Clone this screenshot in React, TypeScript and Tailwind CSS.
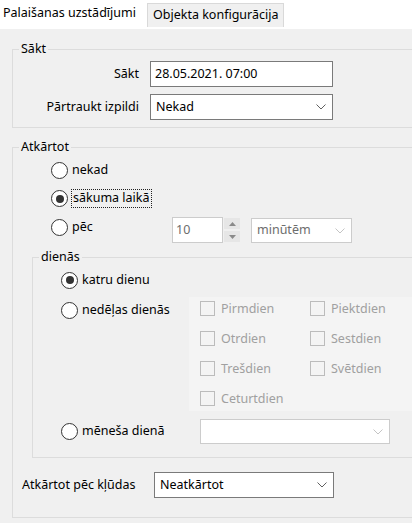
import React from "react";

function Radio({ checked = false }: { checked?: boolean }) {
  return (
    <div className="w-[17px] h-[17px] shrink-0 rounded-full border border-[#333333] bg-white flex items-center justify-center">
      {checked && <div className="w-[8px] h-[8px] rounded-full bg-[#333333]" />}
    </div>
  );
}

function Chevron({ disabled = false }: { disabled?: boolean }) {
  return (
    <svg width="10" height="6" viewBox="0 0 10 6" className="shrink-0">
      <path
        d="M0.5 0.5 L5 5 L9.5 0.5"
        fill="none"
        stroke={disabled ? "#c4c4c4" : "#606060"}
        strokeWidth="1"
      />
    </svg>
  );
}

function Combo({
  value,
  disabled = false,
  className,
}: {
  value: string;
  disabled?: boolean;
  className: string;
}) {
  return (
    <div
      className={
        "flex items-center justify-between bg-white border pl-[5px] pr-[6px] " +
        (disabled ? "border-[#cccccc] text-[#6d6d6d] " : "border-[#7a7a7a] ") +
        className
      }
    >
      <span>{value}</span>
      <Chevron disabled={disabled} />
    </div>
  );
}

function DayBox({ label }: { label: string }) {
  return (
    <div className="flex items-center h-[15px]">
      <div className="w-[15px] h-[15px] shrink-0 border border-[#bcbcbc]" />
      <span className="ml-[6px] text-[#a0a0a0] leading-[15px]">{label}</span>
    </div>
  );
}

function Arrow({ up }: { up: boolean }) {
  return (
    <svg width="7" height="4" viewBox="0 0 7 4">
      <path d={up ? "M0 4 L3.5 0 L7 4 Z" : "M0 0 L3.5 4 L7 0 Z"} fill="#8a8a8a" />
    </svg>
  );
}

export default function App() {
  return (
    <div className="w-[412px] h-[523px] overflow-hidden bg-white font-['Noto_Sans',sans-serif] text-[12.5px] text-black flex flex-col">
      {/* tab strip */}
      <div className="flex h-[29px] shrink-0">
        <div className="w-[147px] h-[29px] bg-white pl-[3px] pt-[5px] leading-[16px] whitespace-nowrap">
          Palaišanas uzstādījumi
        </div>
        <div className="mt-[3px] h-[24px] w-[137px] bg-[#f0f0f0] border border-b-0 border-[#d9d9d9] pl-[5px] pt-[3px] leading-[16px] whitespace-nowrap">
          Objekta konfigurācija
        </div>
      </div>

      {/* tab page */}
      <div className="flex-1 bg-[#f0f0f0] pl-[12px] pt-[12px]">
        {/* start */}
        <fieldset className="border border-r-0 border-[#dcdcdc]">
          <legend className="ml-[6px] px-[2px] leading-[16px]">Sākt</legend>
          <div className="pt-[4px] pb-[7px] flex flex-col gap-[7px]">
            <div className="flex items-center h-[26px]">
              <div className="w-[126px] text-right">Sākt</div>
              <div className="ml-[11px] w-[183px] h-[26px] border border-[#7a7a7a] bg-white pl-[4px] flex items-center">
                28.05.2021. 07:00
              </div>
            </div>
            <div className="flex items-center h-[26px]">
              <div className="w-[126px] text-right">Pārtraukt izpildi</div>
              <Combo value="Nekad" className="ml-[11px] w-[183px] h-[26px]" />
            </div>
          </div>
        </fieldset>

        {/* repeat */}
        <fieldset className="mt-[11px] border border-r-0 border-[#dcdcdc]">
          <legend className="ml-[6px] px-[2px] leading-[16px]">Atkārtot</legend>
          <div className="pt-[6px] pb-[19px]">
            <div className="pl-[38px] h-[18px] flex items-center">
              <Radio />
              <span className="ml-[4px]">nekad</span>
            </div>
            <div className="mt-[10px] pl-[38px] h-[19px] flex items-center">
              <Radio checked />
              <span className="ml-[3px] h-[19px] px-[1px] border border-dotted border-[#222222] flex items-center">
                sākuma laikā
              </span>
            </div>
            <div className="mt-[9px] pl-[38px] h-[26px] flex items-start">
              <div className="w-[121px] h-[18px] mt-[1px] flex items-center">
                <Radio />
                <span className="ml-[4px]">pēc</span>
              </div>
              <div className="w-[51px] h-[26px] border border-[#cccccc] bg-white pl-[3px] flex items-center text-[#6d6d6d]">
                10
              </div>
              <div className="ml-[1px] w-[16px] h-[26px] pt-[1px] flex flex-col">
                <div className="h-[11px] bg-[#e6e6e6] flex items-center justify-center">
                  <Arrow up />
                </div>
                <div className="mt-[2px] h-[11px] bg-[#e6e6e6] flex items-center justify-center">
                  <Arrow up={false} />
                </div>
              </div>
              <Combo value="minūtēm" disabled className="ml-[11px] mt-[1px] w-[101px] h-[25px]" />
            </div>

            {/* days */}
            <fieldset className="mt-[6px] ml-[19px] border border-r-0 border-[#dcdcdc]">
              <legend className="ml-[6px] px-[2px] leading-[16px]">dienās</legend>
              <div className="pt-[6px] pb-[13px]">
                <div className="pl-[28px] h-[18px] flex items-center">
                  <Radio checked />
                  <span className="ml-[4px]">katru dienu</span>
                </div>
                <div className="mt-[8px] flex">
                  <div className="w-[156px] pl-[28px] pt-[4px]">
                    <div className="h-[18px] flex items-center">
                      <Radio />
                      <span className="ml-[4px]">nedēļas dienās</span>
                    </div>
                  </div>
                  <div className="flex-1 bg-[#f4f4f4] pl-[11px] pt-[4px] pb-[5px] grid grid-cols-[110px_110px] gap-y-[15px]">
                    <DayBox label="Pirmdien" />
                    <DayBox label="Piektdien" />
                    <DayBox label="Otrdien" />
                    <DayBox label="Sestdien" />
                    <DayBox label="Trešdien" />
                    <DayBox label="Svētdien" />
                    <DayBox label="Ceturtdien" />
                  </div>
                </div>
                <div className="mt-[8px] pl-[28px] h-[25px] flex items-center">
                  <div className="w-[139px] flex items-center">
                    <Radio />
                    <span className="ml-[4px]">mēneša dienā</span>
                  </div>
                  <Combo value="" disabled className="w-[190px] h-[25px]" />
                </div>
              </div>
            </fieldset>

            <div className="mt-[14px] pl-[9px] h-[26px] flex items-center">
              <div className="w-[132px]">Atkārtot pēc kļūdas</div>
              <Combo value="Neatkārtot" className="w-[180px] h-[26px]" />
            </div>
          </div>
        </fieldset>
      </div>
    </div>
  );
}
